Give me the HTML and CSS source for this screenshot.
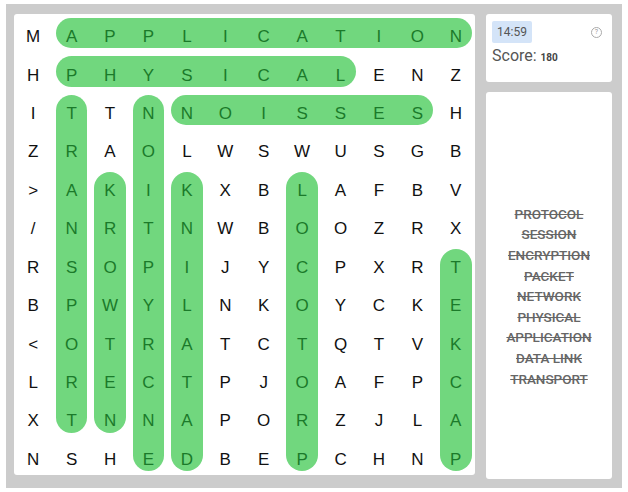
FILE: index.html
```html
<!DOCTYPE html>
<html>
<head>
<meta charset="utf-8">
<link rel="stylesheet" href="styles.css">
</head>
<body>
<div class="app">
  <div class="board">
    <div class="pills">
      <div class="pill" style="grid-area: 1 / 2 / 2 / 13"></div>
      <div class="pill" style="grid-area: 2 / 2 / 3 / 10"></div>
      <div class="pill" style="grid-area: 3 / 5 / 4 / 12"></div>
      <div class="pill" style="grid-area: 3 / 2 / 12 / 3"></div>
      <div class="pill" style="grid-area: 5 / 3 / 12 / 4"></div>
      <div class="pill" style="grid-area: 3 / 4 / 13 / 5"></div>
      <div class="pill" style="grid-area: 5 / 5 / 13 / 6"></div>
      <div class="pill" style="grid-area: 5 / 8 / 13 / 9"></div>
      <div class="pill" style="grid-area: 7 / 12 / 13 / 13"></div>
    </div>
    <div class="letters" id="letters"></div>
  </div>
  <div class="side">
    <div class="status">
      <div class="status-top">
        <span class="timer">14:59</span>
        <span class="help">?</span>
      </div>
      <div class="score">Score: <b>180</b></div>
    </div>
    <div class="words">
      <ul class="word-list">
        <li>PROTOCOL</li>
        <li>SESSION</li>
        <li>ENCRYPTION</li>
        <li>PACKET</li>
        <li>NETWORK</li>
        <li>PHYSICAL</li>
        <li>APPLICATION</li>
        <li>DATA LINK</li>
        <li>TRANSPORT</li>
      </ul>
    </div>
  </div>
</div>
<script>
  var rows = [
    "MAPPLICATION",
    "HPHYSICALENZ",
    "ITTNNOISSESH",
    "ZRAOLWSWUSGB",
    ">AKIKXBLAFBV",
    "/NRTNWBOOZRX",
    "RSOPIJYCPXRT",
    "BPWYLNKOYCKE",
    "<OTRATCTQTVK",
    "LRECTPJOAFPC",
    "XTNNAPORZJLA",
    "NSHEDBEPCHNP"
  ];
  var found = [
    [0,1,0,11],[1,1,1,8],[2,4,2,10],[2,1,10,1],[4,2,10,2],
    [2,3,11,3],[4,4,11,4],[4,7,11,7],[6,11,11,11]
  ];
  function hit(r,c){
    for (var i=0;i<found.length;i++){
      var f=found[i];
      if (r>=f[0]&&r<=f[2]&&c>=f[1]&&c<=f[3]) return true;
    }
    return false;
  }
  var host=document.getElementById('letters');
  for (var r=0;r<12;r++){
    for (var c=0;c<12;c++){
      var d=document.createElement('div');
      d.className='cell'+(hit(r,c)?' on':'');
      d.textContent=rows[r][c];
      host.appendChild(d);
    }
  }
</script>
</body>
</html>
```

FILE: styles.css
```css
html, body {
  margin: 0;
  padding: 0;
  background: #ffffff;
}
body {
  padding: 4px 6px 4px 6px;
}
.app {
  width: 616px;
  height: 484px;
  box-sizing: border-box;
  background: #cccccc;
  padding: 10px 10px 9px 8px;
  display: flex;
  gap: 11px;
}
.board {
  position: relative;
  width: 461px;
  height: 461px;
  flex: none;
  background: #ffffff;
  border-radius: 3px;
}
.pills, .letters {
  position: absolute;
  inset: 0;
  display: grid;
  grid-template-columns: repeat(12, 1fr);
  grid-template-rows: repeat(12, 1fr);
}
.pill {
  margin: 4px 3.5px 4px 3.5px;
  background: #71d77e;
  border-radius: 16px;
}
.cell {
  display: flex;
  align-items: center;
  justify-content: center;
  padding-top: 8px;
  box-sizing: border-box;
  font-family: "Liberation Sans", Arial, sans-serif;
  font-size: 17px;
  color: #111111;
}
.cell.on {
  color: #1b7a2a;
}
.side {
  flex: 1;
  display: flex;
  flex-direction: column;
  gap: 10px;
}
.status {
  height: 68px;
  box-sizing: border-box;
  background: #ffffff;
  border-radius: 3px;
  padding: 7px 6px;
  font-family: Roboto, "Liberation Sans", sans-serif;
}
.status-top {
  display: flex;
  justify-content: space-between;
  align-items: center;
}
.timer {
  display: inline-block;
  background: #d4e4f8;
  color: #555555;
  font-size: 12px;
  line-height: 22px;
  padding: 0 5px;
  border-radius: 2px;
}
.help {
  width: 9px;
  height: 9px;
  border: 1px solid #aaaaaa;
  border-radius: 50%;
  color: #999999;
  font-size: 7px;
  line-height: 9px;
  text-align: center;
  margin-right: 4px;
}
.score {
  margin-top: 3px;
  color: #555555;
  font-size: 16px;
}
.score b {
  font-size: 10px;
  font-weight: bold;
  color: #444444;
}
.words {
  flex: 1;
  background: #ffffff;
  border-radius: 3px;
  display: flex;
  align-items: center;
  justify-content: center;
  padding-top: 22px;
  box-sizing: border-box;
}
.word-list {
  list-style: none;
  margin: 0;
  padding: 0;
  text-align: center;
  font-family: Roboto, "Liberation Sans", sans-serif;
  font-size: 13.5px;
  font-weight: 500;
  line-height: 20.6px;
  color: #666666;
}
.word-list li {
  text-decoration: line-through;
}
```
